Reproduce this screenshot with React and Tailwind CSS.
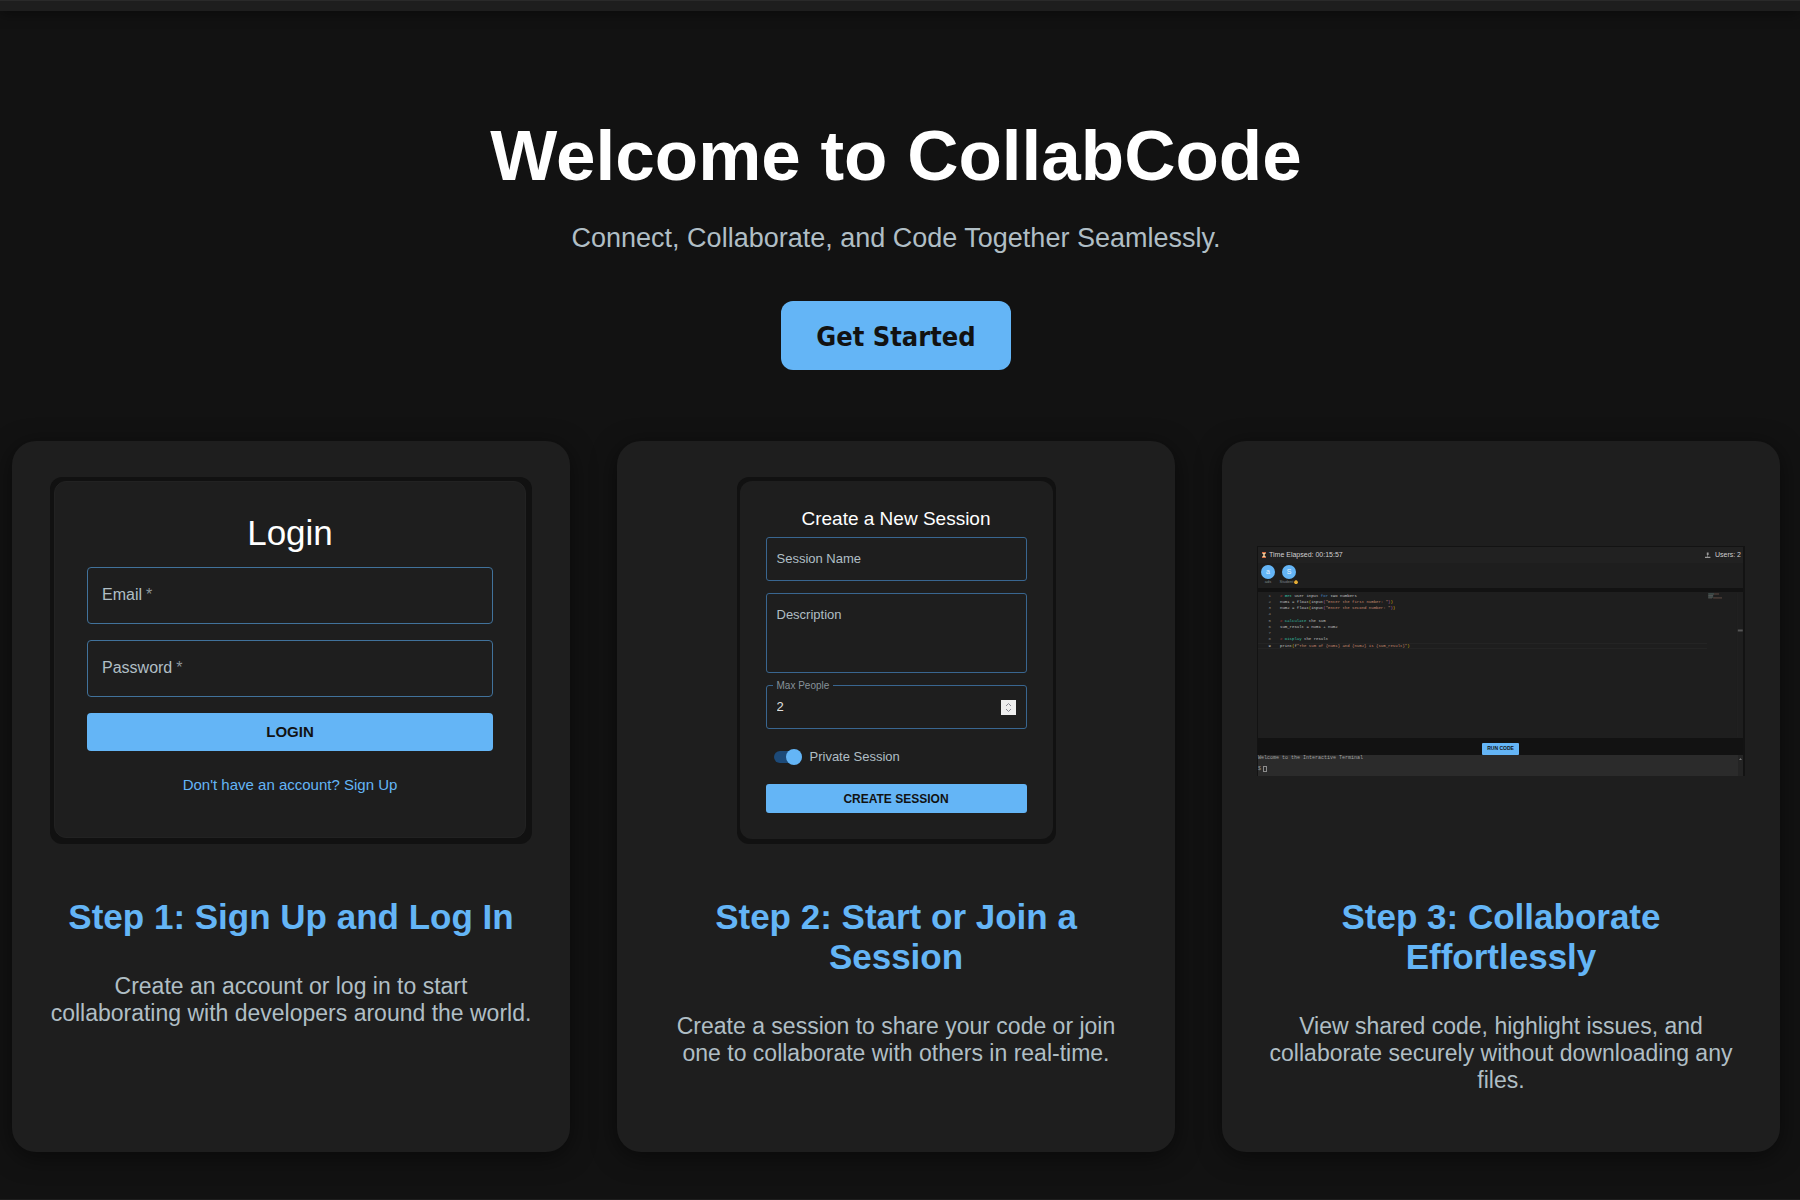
function Field({ id, label, required, type = "text" }) {
  return (
    <div className="grid h-[57px] w-full items-center rounded border border-[#41729b] px-3.5 pb-0.5">
      <label htmlFor={id} className="col-start-1 row-start-1 text-base leading-5 text-[#b0bec5]">
        {label}
        {required && <span className="ml-1 text-[#8b969b]">*</span>}
      </label>
      <input id={id} type={type} className="col-start-1 row-start-1 w-full bg-transparent outline-none" />
    </div>
  );
}

function LoginPreview() {
  return (
    <div className="w-full max-w-[482px] rounded-xl bg-[#111111] pt-1 pr-1.5 pb-1.5 pl-1">
      <form className="flex h-[357px] flex-col items-center rounded-xl border border-[#222222] bg-[#1e1e1e] px-8 pt-[31px]">
        <h3 className="text-[35px] leading-10 text-white">Login</h3>
        <div className="mt-3.5 flex w-full flex-col gap-4">
          <Field id="email" label="Email" required type="email" />
          <Field id="password" label="Password" required type="password" />
          <button type="button" className="h-[38px] rounded bg-[#64b5f6] text-[15px] font-bold text-[#121212]">LOGIN</button>
        </div>
        <a href="#signup" className="mt-6 text-[15px] leading-5 text-[#64b5f6]">Don't have an account? Sign Up</a>
      </form>
    </div>
  );
}

function SessionPreview() {
  return (
    <div className="w-[319px] rounded-xl bg-[#111111] px-[3px] pt-1 pb-[5px]">
      <form className="flex h-[358px] flex-col rounded-xl bg-[#1e1e1e] px-[26px] pt-[26px]">
        <h3 className="text-center text-[19px] leading-6 text-white">Create a New Session</h3>
        <div className="mt-1.5 grid h-11 items-center rounded-[3px] border border-[#396690] px-2.5 text-[13px] text-[#b0bec5]">
          <label htmlFor="sname" className="col-start-1 row-start-1">Session Name</label>
          <input id="sname" className="col-start-1 row-start-1 w-full bg-transparent outline-none" />
        </div>
        <div className="mt-3 grid h-20 rounded-[3px] border border-[#396690] px-2.5 py-[11px] text-[13px] text-[#b0bec5]">
          <label htmlFor="desc" className="col-start-1 row-start-1">Description</label>
          <textarea id="desc" className="col-start-1 row-start-1 w-full resize-none bg-transparent outline-none" />
        </div>
        <div className="relative mt-3 flex h-11 items-center justify-between rounded-[3px] border border-[#396690] px-2.5">
          <label htmlFor="maxp" className="absolute -top-2 left-1.5 bg-[#1e1e1e] px-1 text-[10px] leading-4 text-[#87929a]">Max People</label>
          <input id="maxp" type="text" inputMode="numeric" defaultValue="2" className="w-20 bg-transparent text-[13px] text-[#e0e0e0] outline-none" />
          <button type="button" aria-label="Change number" className="grid h-[15px] w-[15px] place-items-center bg-[#eeeeee]">
            <svg viewBox="0 0 15 15" className="h-[15px] w-[15px]" fill="none" stroke="#8a8a94" strokeWidth="1">
              <path d="M5 6 7.5 3.5 10 6M5 9 7.5 11.5 10 9" />
            </svg>
          </button>
        </div>
        <label className="mt-[18px] ml-2 flex h-5 items-center gap-2 text-[13px] text-[#b0bec5]">
          <input type="checkbox" defaultChecked className="peer sr-only" />
          <span className="flex h-3 w-7 items-center justify-end rounded-full bg-[#1d4a78]">
            <span className="size-4 shrink-0 rounded-full bg-[#64b5f6]" />
          </span>
          Private Session
        </label>
        <button type="button" className="mt-[17px] h-[29px] rounded-[3px] bg-[#64b5f6] text-xs font-bold text-[#121212]">CREATE SESSION</button>
      </form>
    </div>
  );
}

const W = "text-[#c4c4c4]";
const G = "text-[#35bfa3]";
const R = "text-[#f04f4f]";
const S = "text-[#c98a70]";
const Y = "text-[#e0c200]";
const P = "text-[#bd63ba]";
const B = "text-[#478ac6]";
const code = [
  [[R, "# "], [G, "Get"], [W, " user input "], [B, "for"], [W, " two numbers"]],
  [[W, "num1 = float"], [Y, "("], [W, "input"], [P, "("], [S, '"Enter the first number: "'], [P, ")"], [Y, ")"]],
  [[W, "num2 = float"], [Y, "("], [W, "input"], [P, "("], [S, '"Enter the second number: "'], [P, ")"], [Y, ")"]],
  [],
  [[R, "# "], [G, "Calculate"], [W, " the sum"]],
  [[W, "sum_result = num1 + num2"]],
  [],
  [[R, "# "], [G, "Display"], [W, " the result"]],
  [[W, "print"], [Y, "("], [W, "f"], [S, '"The sum of {num1} and {num2} is {sum_result}"'], [Y, ")"]],
];

function Avatar({ letter, name, crown }) {
  return (
    <div className="flex w-5 flex-col items-center">
      <span className="grid size-3.5 place-items-center rounded-full bg-[#64b5f6] text-[7px] leading-none text-[#e4f2fd]">{letter}</span>
      <span className="flex items-center gap-px text-[4px] leading-[6px] whitespace-nowrap text-[#7c8589]">
        {name}
        {crown && (
          <svg viewBox="0 0 8 8" className="size-1" fill="#e5ad35"><path d="M1 2 4 0 7 2 8 5 6 8H2L0 5z" /></svg>
        )}
      </span>
    </div>
  );
}

function EditorPreview() {
  return (
    <div className="w-full border border-r-2 border-b-0 border-[#131313] bg-[#1e1e1e]">
      <div className="flex h-4 items-center justify-between bg-[#212121] pr-0.5 pl-1 text-[7px] leading-none text-[#d0d0d0]">
        <span className="flex items-center gap-[3px]">
          <svg viewBox="0 0 10 14" className="h-1.5 w-1"><path d="M0 0h10v2L6 7l4 5v2H0v-2l4-5-4-5z" fill="#f3cf9c" /><path d="M0 0h10v2H0zM0 12h10v2H0z" fill="#e0562c" /></svg>
          Time Elapsed: 00:15:57
        </span>
        <span className="flex items-center gap-1">
          <svg viewBox="0 0 10 10" className="h-1.5 w-1.5" fill="#9a9a9a"><path d="M3 1h3v4H3zM0 8h9v2H0zM4 5h1v3H4z" /></svg>
          Users: 2
        </span>
      </div>
      <div className="flex h-[25px] items-start gap-px pt-0.5">
        <Avatar letter="a" name="ads" />
        <Avatar letter="S" name="Student" crown />
      </div>
      <div className="h-1 bg-[#121212]" />
      <div className="flex h-[146px] items-start justify-between pt-px">
        <ol className='flex h-14 flex-1 flex-col justify-between font-["Liberation_Mono",monospace] text-[4px] leading-[6px]'>
          {code.map((line, i) => (
            <li key={i} className={i === 8 ? "flex border-y border-[#242424] leading-1" : "flex"}>
              <span className={i === 8 ? "w-[13px] text-right text-[#c6c6c6]" : "w-[13px] text-right text-[#858585]"}>{i + 1}</span>
              <code className='ml-[9px] font-["Liberation_Mono",monospace] whitespace-pre'>
                {line.map(([c, t], j) => <span key={j} className={c}>{t}</span>)}
              </code>
            </li>
          ))}
        </ol>
        <svg viewBox="0 0 36 146" className="h-[144px] w-9" fill="none">
          <path d="M1 1h6M1 4h5" stroke="#58706b" />
          <path d="M7 1h5M6 5h9" stroke="#604a42" />
          <path d="M1 2.500h5M1 5h4" stroke="#555" />
          <path d="M30.500 0v146" stroke="#222" />
          <path d="M31 38h5" stroke="#555" strokeWidth="2" />
        </svg>
      </div>
      <div className="flex h-[17px] items-end justify-center bg-[#121212]">
        <button type="button" className="h-3 w-[37px] rounded-[1px] bg-[#64b5f6] text-[5px] leading-none font-bold text-[#121212]">RUN CODE</button>
      </div>
      <div className='flex h-[21px] justify-between bg-[#2b2b2b] font-["Liberation_Mono",monospace] text-[5px] leading-[6px] text-[#a0a0a0]'>
        <div className="flex flex-col justify-between">
          <p>Welcome to the Interactive Terminal</p>
          <p className="flex items-center gap-0.5 pb-1">$ <span className="h-1.5 w-1 border border-[#8c8c8c]" /></p>
        </div>
        <span className="w-[5px] bg-[#242424] pt-0.5">
          <svg viewBox="0 0 5 4" className="h-1 w-[5px]" fill="#777"><path d="M1 3 2.500 1 4 3z" /></svg>
        </span>
      </div>
    </div>
  );
}

function StepCard({ preview, title, text }) {
  return (
    <article className="flex min-h-[711px] min-w-0 flex-1 flex-col items-center rounded-3xl bg-[#1e1e1e] px-[35px] pt-9 text-center shadow-[0_5px_24px_rgba(0,0,0,0.5)]">
      <div className="flex h-[367px] w-full items-center justify-center text-left">{preview}</div>
      <h2 className="mt-[53px] text-[35px] leading-10 font-bold text-[#64b5f6]">{title}</h2>
      <p className="mt-9 max-w-[482px] text-[23px] leading-[27px] text-[#b0bec5]">{text}</p>
    </article>
  );
}

export default function App() {
  return (
    <div className={'flex min-h-screen flex-col bg-[#121212] font-["Liberation_Sans",Arial,sans-serif]'}>
      <header className="h-[11px] border-t border-[#2a2a2a] bg-[#1e1e1e] shadow-[0_2px_14px_rgba(0,0,0,0.5)]" />
      <main className="flex-1 pr-5 pl-3">
        <section className="flex flex-col items-center pt-[105px]">
          <h1 className="text-center text-[71px] leading-20 font-bold text-white">Welcome to CollabCode</h1>
          <p className="mt-[26px] text-[27px] leading-8 text-[#b0bec5]">Connect, Collaborate, and Code Together Seamlessly.</p>
          <button type="button" className='mt-[47px] h-[69px] rounded-xl bg-[#64b5f6] px-[35px] pt-[3px] font-["DejaVu_Sans_Condensed","Noto_Sans",sans-serif] text-[27px] font-bold text-[#121212]'>
            Get Started
          </button>
        </section>
        <section className="mt-[71px] flex gap-[47px] pb-[47px]">
          <StepCard preview={<LoginPreview />} title="Step 1: Sign Up and Log In" text="Create an account or log in to start collaborating with developers around the world." />
          <StepCard preview={<SessionPreview />} title="Step 2: Start or Join a Session" text="Create a session to share your code or join one to collaborate with others in real-time." />
          <StepCard preview={<EditorPreview />} title="Step 3: Collaborate Effortlessly" text="View shared code, highlight issues, and collaborate securely without downloading any files." />
        </section>
      </main>
      <footer className="h-px bg-[#1e1e1e]" />
    </div>
  );
}
